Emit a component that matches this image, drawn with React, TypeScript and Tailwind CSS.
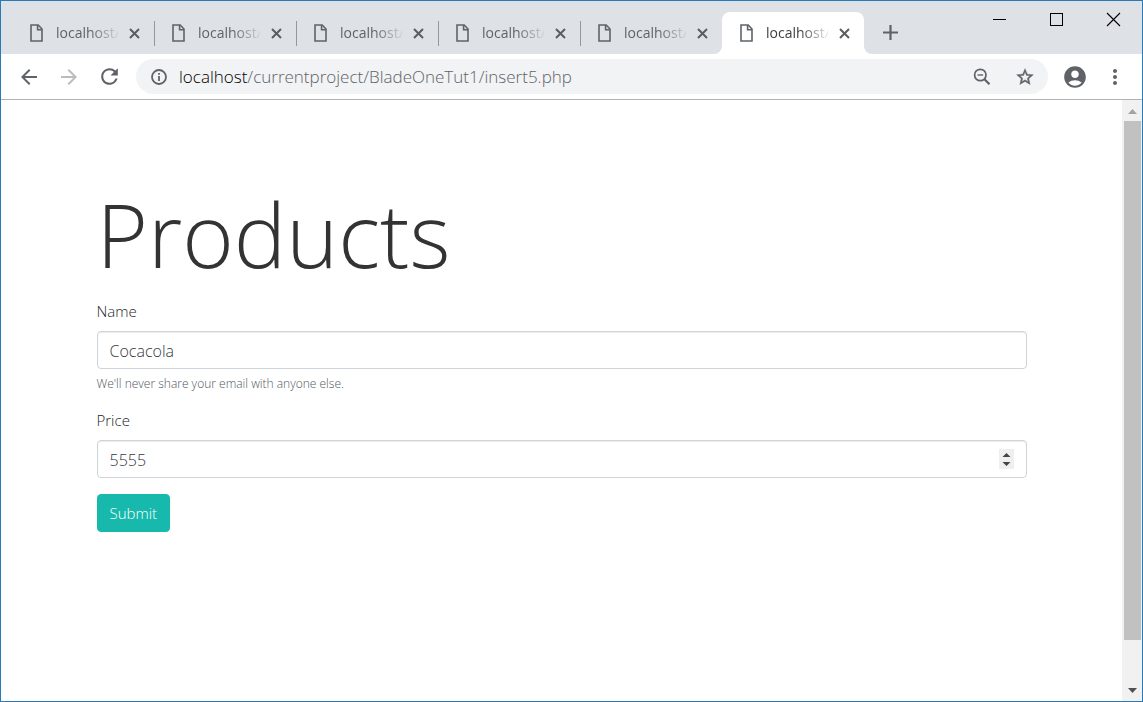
import React, { useState } from "react";
import {
  MdAccountCircle,
  MdArrowBack,
  MdArrowForward,
  MdMoreVert,
  MdRefresh,
} from "react-icons/md";

function FileIcon() {
  return (
    <svg width="13" height="18" viewBox="0 0 13 18" fill="none" stroke="#5f6368" strokeWidth="1.6" className="shrink-0">
      <path d="M1 1h7.2L12 5v12H1z" />
      <path d="M7.6 1v4.8H12" />
    </svg>
  );
}

function CloseIcon() {
  return (
    <svg width="11" height="11" viewBox="0 0 11 11" stroke="#5a5d61" strokeWidth="2">
      <path d="M1 1l9 9M10 1l-9 9" />
    </svg>
  );
}

function InfoIcon() {
  return (
    <svg width="16" height="16" viewBox="0 0 16 16" fill="none" stroke="currentColor" strokeWidth="1.8" className="shrink-0">
      <circle cx="8" cy="8" r="7" />
      <path d="M8 4v1.800M8 7v5" />
    </svg>
  );
}

function ZoomOutIcon() {
  return (
    <svg width="18" height="18" viewBox="0 0 18 18" fill="none" stroke="currentColor" strokeWidth="1.7">
      <circle cx="7.300" cy="7" r="5.700" />
      <path d="M4.500 7h5.600" strokeWidth="1.400" />
      <path d="M11.500 11.200l5 5" strokeWidth="2.200" />
    </svg>
  );
}

function StarIcon() {
  return (
    <svg width="20" height="20" viewBox="0 0 24 24" fill="currentColor" stroke="currentColor" strokeWidth="0.5">
      <path d="M22 9.240l-7.190-.62L12 2 9.190 8.630 2 9.240l5.460 4.730L5.820 21 12 17.270 18.180 21l-1.630-7.030L22 9.240zM12 15.400l-3.760 2.270 1-4.280-3.320-2.880 4.380-.38L12 6.100l1.710 4.040 4.380.38-3.320 2.880 1 4.280L12 15.400z" />
    </svg>
  );
}

function Tab({ active, divider }: { active: boolean; divider: boolean }) {
  return (
    <div
      className={
        active
          ? "relative flex h-[42px] w-[142px] items-center rounded-t-lg bg-white pl-[18px] pr-[14px] text-[#3c4043]"
          : "relative flex h-[42px] w-[142px] items-center pl-[18px] pr-[14px] text-[#5f6368]"
      }
    >
      <button type="button" role="tab" aria-selected={active} className="flex min-w-0 flex-1 items-center gap-[13px]">
        <FileIcon />
        <span className="w-[62px] whitespace-nowrap text-left text-[14px] leading-5 [mask-image:linear-gradient(to_right,black_55%,transparent_105%)]">
          localhost/
        </span>
      </button>
      <button type="button" aria-label="Close tab" className="ml-[10px] shrink-0">
        <CloseIcon />
      </button>
      {divider && <span className="absolute right-[-1px] top-[9px] h-[25px] w-px bg-[#94979b]" />}
      {active && (
        <>
          <svg className="absolute bottom-0 left-[-8px]" width="8" height="8" fill="white">
            <path d="M8 0v8H0a8 8 0 0 0 8-8z" />
          </svg>
          <svg className="absolute bottom-0 right-[-8px]" width="8" height="8" fill="white">
            <path d="M0 0v8h8a8 8 0 0 1-8-8z" />
          </svg>
        </>
      )}
    </div>
  );
}

function WindowControls() {
  return (
    <div className="ml-auto flex items-center gap-[42px] self-start pr-[21px] pt-[11px]">
      <button type="button" aria-label="Minimize">
        <svg width="15" height="15" stroke="black" shapeRendering="crispEdges">
          <path d="M1 7.5h13" />
        </svg>
      </button>
      <button type="button" aria-label="Maximize">
        <svg width="15" height="15" fill="none" stroke="black" shapeRendering="crispEdges">
          <path d="M1.5 1.5h12v12h-12z" />
        </svg>
      </button>
      <button type="button" aria-label="Close window">
        <svg width="15" height="15" stroke="black" strokeWidth="1.1">
          <path d="M1 1l13 13M14 1L1 14" />
        </svg>
      </button>
    </div>
  );
}

function Toolbar() {
  return (
    <div className="flex h-[46px] shrink-0 items-center border-b border-[#b0b2b5] bg-white pl-4 pr-[15px] text-[#5f6368]">
      <div className="flex items-center gap-4">
        <button type="button" aria-label="Back"><MdArrowBack size={24} /></button>
        <button type="button" aria-label="Forward" className="text-[#babcbe]"><MdArrowForward size={24} /></button>
        <button type="button" aria-label="Reload"><MdRefresh size={25} /></button>
      </div>
      <div className="ml-[14px] flex h-[35px] min-w-0 flex-1 items-center rounded-full bg-[#f1f3f4] pl-[15px] pr-[13px]">
        <InfoIcon />
        <div className="ml-3 min-w-0 flex-1 truncate text-[17px] leading-6 text-[#5f6368]">
          <span className="text-black">localhost</span>/currentproject/BladeOneTut1/insert5.php
        </div>
        <div className="flex items-center gap-6">
          <button type="button" aria-label="Zoom"><ZoomOutIcon /></button>
          <button type="button" aria-label="Bookmark"><StarIcon /></button>
        </div>
      </div>
      <button type="button" aria-label="Profile" className="ml-[14px]"><MdAccountCircle size={26} /></button>
      <button type="button" aria-label="Menu" className="ml-[15px]"><MdMoreVert size={24} /></button>
    </div>
  );
}

function Scrollbar() {
  return (
    <div className="flex w-[20px] shrink-0 flex-col items-center bg-[#f1f1f1]" aria-hidden="true">
      <svg width="20" height="21" fill="#a3a3a3"><path d="M6 14l4.500-5 4.500 5z" /></svg>
      <div className="w-[17px] grow-[52] bg-[#c1c1c1]" />
      <div className="grow-[4]" />
      <svg width="20" height="21" fill="#505050"><path d="M6 8l4.500 5 4.500-5z" /></svg>
    </div>
  );
}

const fieldClass =
  "block h-[38px] w-full rounded-[4px] border border-[#ced4da] bg-white px-3 pt-[2px] text-base text-[#343a40] shadow-[inset_0_1px_1px_rgba(0,0,0,0.08)] outline-none";
const labelClass = "block text-[15px] leading-6 text-[#212529]";

export default function App() {
  const [price, setPrice] = useState("5555");
  const step = (by: number) => setPrice(String(Number(price) + by));

  return (
    <div className="flex min-h-screen flex-col border border-[#2a7ab8] bg-white font-['Open_Sans','Noto_Sans',sans-serif] font-light">
      <div className="flex h-[53px] shrink-0 items-end bg-[#dee1e6] pl-[11px]">
        <div role="tablist" className="flex font-normal">
          {[0, 1, 2, 3, 4, 5].map((i) => (
            <Tab key={i} active={i === 5} divider={i < 4} />
          ))}
        </div>
        <button type="button" aria-label="New tab" className="mb-[14px] ml-[19px]">
          <svg width="15" height="15" stroke="#5f6368" strokeWidth="2.200"><path d="M7.500 0v15M0 7.500h15" /></svg>
        </button>
        <WindowControls />
      </div>
      <Toolbar />
      <div className="flex flex-1">
        <main className="flex-1 px-4 pt-[78px]">
          <form className="mx-auto max-w-[930px]" onSubmit={(e) => e.preventDefault()}>
            <h1 className="text-[88px] leading-[112px] text-[#333333]">Products</h1>
            <label htmlFor="name" className={`mt-[9px] ${labelClass}`}>Name</label>
            <input id="name" type="text" defaultValue="Cocacola" className={`mt-2 ${fieldClass}`} />
            <p className="mt-1 text-[12px] leading-[22px] text-[#50575e]">We'll never share your email with anyone else.</p>
            <label htmlFor="price" className={`mt-[13px] ${labelClass}`}>Price</label>
            <div className="relative mt-2">
              <input
                id="price"
                type="number"
                value={price}
                onChange={(e) => setPrice(e.target.value)}
                className={`[appearance:textfield] [&::-webkit-inner-spin-button]:appearance-none ${fieldClass}`}
              />
              <div className="absolute right-[13px] top-[9px] flex w-[15px] flex-col bg-[#efefef]">
                <button type="button" aria-label="Increase price" onClick={() => step(1)}>
                  <svg width="15" height="10" fill="#444444" className="block"><path d="M3.500 8l4-4 4 4z" /></svg>
                </button>
                <button type="button" aria-label="Decrease price" onClick={() => step(-1)}>
                  <svg width="15" height="10" fill="#444444" className="block"><path d="M3.500 3l4 4 4-4z" /></svg>
                </button>
              </div>
            </div>
            <button type="submit" className="mt-4 h-[38px] rounded-[4px] border border-[#17b9ac] bg-[#17b9ac] px-3 text-[15px] text-white">
              Submit
            </button>
          </form>
        </main>
        <Scrollbar />
      </div>
    </div>
  );
}
